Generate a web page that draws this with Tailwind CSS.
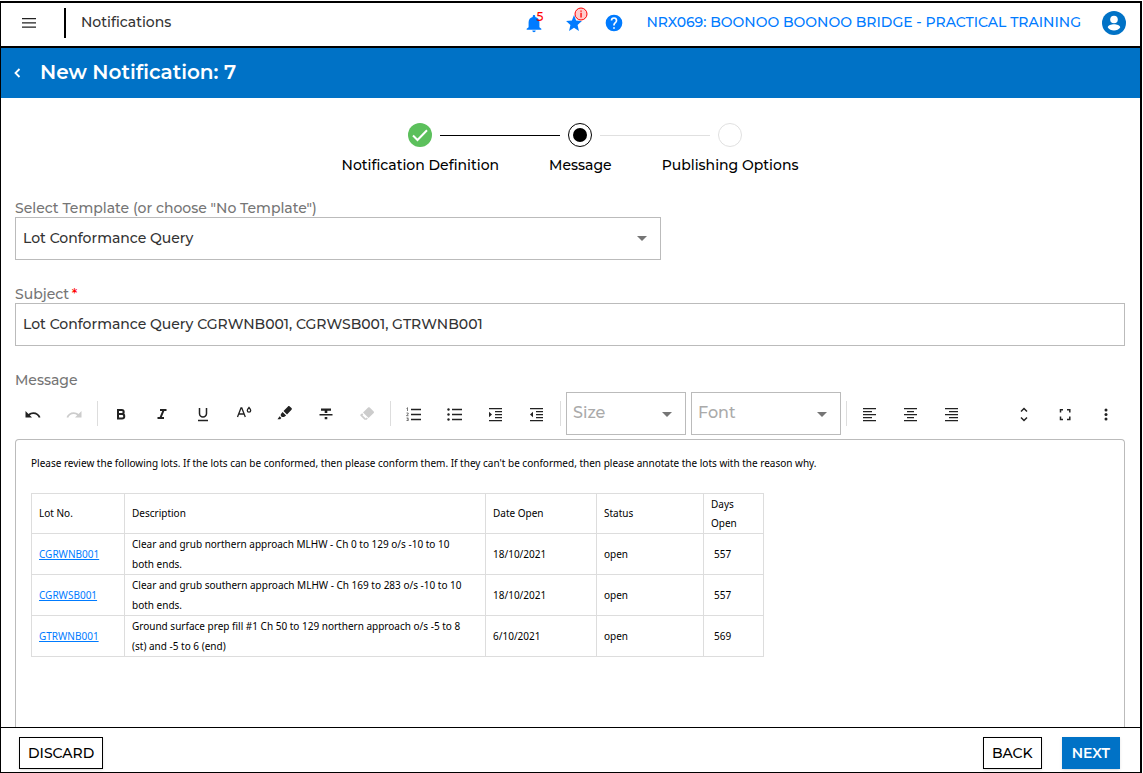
<!DOCTYPE html>
<html lang="en">
	<head>
		<meta charset="UTF-8" />
		<meta name="viewport" content="width=device-width, initial-scale=1.0" />
		<title>New Notification</title>
		<script src="https://cdn.jsdelivr.net/npm/@tailwindcss/browser@4"></script>
	</head>
	<body class="bg-white pt-px pr-px text-sm font-medium text-black font-['Montserrat','Inter',sans-serif]">
		<div class="flex flex-col h-[calc(100vh-1px)] border-t-2 border-r-2 border-b border-l border-black">
			<!-- Top bar -->
			<header class="flex items-center shrink-0 h-[45px] border-b-2 border-black pl-5 pr-[14px] pb-1">
				<button aria-label="Menu" class="w-4 h-4">
					<svg viewBox="0 0 16 16" class="w-4 h-4" fill="#222"><path d="M1 3h14v1.2H1zM1 7.3h14v1.2H1zM1 11.6h14v1.200H1z" /></svg>
				</button>
				<span class="w-[2px] h-[30px] bg-black ml-[27px] mr-[15px]"></span>
				<span class="pb-[2px] text-[#333]">Notifications</span>
				<div class="flex items-center ml-auto text-[#007bff]">
					<button aria-label="Alerts" class="relative w-5 h-5 mr-5">
						<svg viewBox="0 0 24 24" class="w-5 h-5" fill="currentColor"><path d="M12 23c1.1 0 2-.9 2-2h-4c0 1.100.9 2 2 2zm6.500-6v-6c0-3.200-1.800-5.600-5-6.300V4c0-.8-.7-1.500-1.500-1.500S10.500 3.200 10.500 4v.7c-3.200.7-5 3.100-5 6.300v6l-2.300 2v1h17.600v-1z" /></svg>
						<span class="absolute -top-1 left-3 text-xs leading-4 text-[#f00]">5</span>
					</button>
					<button aria-label="Favourites" class="relative w-5 h-5 mr-5">
						<svg viewBox="0 0 24 24" class="w-5 h-5" fill="currentColor"><path d="M12 17.800 17.900 21.500 16.300 14.500 21.500 9.700 14.500 9 12 2.500 9.500 9 2.500 9.700 7.700 14.500 6.100 21.500z" /></svg>
						<svg viewBox="0 0 14 14" class="absolute -top-[6px] left-[10px] w-[14px] h-[14px]"><circle cx="7" cy="7" r="6" fill="#fcc" stroke="#f00" /><path d="M6.400 5.800h1.300V10.500H6.400zM6.400 3.400h1.300v1.300H6.400z" fill="#f00" /></svg>
					</button>
					<button aria-label="Help" class="w-5 h-5 mr-[22px]">
						<svg viewBox="0 0 24 24" class="w-5 h-5" fill="currentColor"><path d="M12 2a10 10 0 1 0 0 20 10 10 0 0 0 0-20zm1 17h-2v-2h2zm2.070-7.750-.9.920C13.450 12.900 13 13.500 13 15h-2v-.5c0-1.100.45-2.100 1.170-2.830l1.240-1.260c.37-.36.59-.86.59-1.410a2 2 0 1 0-4 0H8a4 4 0 1 1 8 0c0 .88-.36 1.680-.93 2.250z" /></svg>
					</button>
					<a href="#" class="mr-[21px] pb-[2px]">NRX069: BOONOO BOONOO BRIDGE - PRACTICAL TRAINING</a>
					<button aria-label="Account" class="w-6 h-6">
						<svg viewBox="0 0 24 24" class="w-6 h-6"><circle cx="12" cy="12" r="12" fill="#0072c6" /><circle cx="12" cy="8.500" r="3.800" fill="#fff" /><path d="M5.800 16.500c0-2.100 3.600-3.200 6.200-3.200s6.200 1.100 6.200 3.200c-1.300 1.900-3.600 3-6.200 3s-4.900-1.100-6.200-3z" fill="#fff" /></svg>
					</button>
				</div>
			</header>

			<!-- Page title -->
			<div class="flex items-center shrink-0 h-[50px] bg-[#0072c6] text-white pl-3 pb-[2px]">
				<button aria-label="Back to list" class="w-2 h-3 mr-[19px]">
					<svg viewBox="0 0 8 12" class="w-2 h-3" fill="none" stroke="#fff" stroke-width="1.800"><path d="M6.500 3 2.500 7l4 4" /></svg>
				</button>
				<h1 class="text-xl font-semibold">New Notification: 7</h1>
			</div>

			<main class="flex flex-col flex-1 min-h-0 overflow-hidden pl-[14px] pr-[15px]">
				<!-- Steps -->
				<ol class="flex justify-center shrink-0 mt-[25px]">
					<li class="flex flex-col items-center">
						<div class="flex items-center w-full gap-2">
							<span class="flex-1"></span>
							<svg viewBox="0 0 24 24" class="w-6 h-6"><circle cx="12" cy="12" r="12" fill="#5cc05c" /><path d="m5 12.500 4.500 4.500L19 7.200" fill="none" stroke="#fff" stroke-width="2" /></svg>
							<span class="flex-1 h-px bg-black"></span>
						</div>
						<span class="px-[25px] mt-2 leading-5">Notification Definition</span>
					</li>
					<li class="flex flex-col items-center">
						<div class="flex items-center w-full gap-2">
							<span class="flex-1 h-px bg-black"></span>
							<svg viewBox="0 0 24 24" class="w-6 h-6"><circle cx="12" cy="12" r="11.500" fill="#fff" stroke="#000" /><circle cx="12" cy="12" r="7" /></svg>
							<span class="flex-1 h-px bg-[#e0e0e0]"></span>
						</div>
						<span class="px-[25px] mt-2 leading-5">Message</span>
					</li>
					<li class="flex flex-col items-center">
						<div class="flex items-center w-full gap-2">
							<span class="flex-1 h-px bg-[#e0e0e0]"></span>
							<svg viewBox="0 0 24 24" class="w-6 h-6"><circle cx="12" cy="12" r="11.500" fill="#fff" stroke="#e0e0e0" /></svg>
							<span class="flex-1"></span>
						</div>
						<span class="px-[25px] mt-2 leading-5">Publishing Options</span>
					</li>
				</ol>

				<!-- Form -->
				<label for="template" class="mt-[23px] leading-5 text-[#757575]">Select Template (or choose "No Template")</label>
				<div class="relative shrink-0 w-[646px] max-w-full -mt-px">
					<select id="template" class="appearance-none w-full h-[43px] border border-[#bbb] bg-white px-[7px] pb-[2px] text-[#333]">
						<option>Lot Conformance Query</option>
					</select>
					<svg viewBox="0 0 10 5" class="absolute right-[14px] top-[19px] w-[10px] h-[5px] pointer-events-none" fill="#757575"><path d="M0 0h10L5 5z" /></svg>
				</div>

				<label for="subject" class="mt-6 leading-5 text-[#757575]">Subject <span class="-ml-px text-[#f00]">*</span></label>
				<input id="subject" type="text" value="Lot Conformance Query CGRWNB001, CGRWSB001, GTRWNB001" class="shrink-0 w-full h-[43px] -mt-px border border-[#bbb] px-[7px] pb-[2px] text-[#333]" />

				<span class="mt-6 leading-5 text-[#757575]">Message</span>

				<!-- Editor toolbar -->
				<div class="flex items-center shrink-0 mt-[2px] -ml-[3px] -mr-px h-[43px] text-[#222]">
					<button aria-label="Undo" class="flex justify-center w-[41px]">
						<svg viewBox="0 0 18 18" class="w-[18px] h-[18px]" fill="currentColor"><path d="M1.500 6v6.500H8L5.800 10.200c1-.8 2.200-1.200 3.500-1.200 2.600 0 4.700 1.500 5.500 3.800l1.700-.5C15.500 9.300 12.700 7.200 9.300 7.200c-1.800 0-3.500.7-4.800 1.800z" /></svg>
					</button>
					<button aria-label="Redo" disabled class="flex justify-center w-[41px] text-[#ccc]">
						<svg viewBox="0 0 18 18" class="w-[18px] h-[18px]" fill="currentColor"><path d="M16.500 6v6.500H10l2.200-2.300c-1-.8-2.200-1.200-3.500-1.200-2.600 0-4.700 1.500-5.500 3.800l-1.700-.5C2.500 9.300 5.300 7.200 8.700 7.200c1.800 0 3.500.7 4.800 1.800z" /></svg>
					</button>
					<span class="w-px h-[25px] bg-[#ddd] ml-[3px] mr-[2px]"></span>
					<button aria-label="Bold" class="flex justify-center w-[41px]">
						<svg viewBox="0 0 18 18" class="w-[18px] h-[18px]" fill="none" stroke="currentColor" stroke-width="2"><path d="M6 5h3.700a1.900 1.900 0 0 1 0 4H6zM6 9h4a2.200 2.200 0 0 1 0 4.500H6z" /></svg>
					</button>
					<button aria-label="Italic" class="flex justify-center w-[41px]">
						<svg viewBox="0 0 18 18" class="w-[18px] h-[18px]" fill="currentColor"><path d="M7 4h6.500v2h-2.200L8.800 12H11v2H4.500v-2h2.200l2.500-6H7z" /></svg>
					</button>
					<button aria-label="Underline" class="flex justify-center w-[41px]">
						<svg viewBox="0 0 18 18" class="w-[18px] h-[18px]" fill="none" stroke="currentColor" stroke-width="1.500"><path d="M5.500 3v5.500a3.500 3.500 0 0 0 7 0V3M4 15.500h10" /></svg>
					</button>
					<button aria-label="Font colour" class="flex justify-center w-[41px]">
						<svg viewBox="0 0 18 18" class="w-[18px] h-[18px]" fill="none" stroke="currentColor" stroke-width="1.300"><path d="M2.500 12 6 3h.8l3.500 9M3.700 9h5.400" /><path d="M14 2.500c1 1.200 1.700 2 1.700 2.900a1.700 1.700 0 0 1-3.400 0c0-.9.700-1.700 1.700-2.900z" /></svg>
					</button>
					<button aria-label="Highlight" class="flex justify-center w-[41px]">
						<svg viewBox="0 0 18 18" class="w-[18px] h-[18px]" fill="currentColor"><path d="m7.500 6 4.500-4.600c.5-.5 1.200-.5 1.700 0l1.800 1.700c.5.500.5 1.200 0 1.700l-4.500 4.600zM6.600 7l3.500 3.400L8 12H6L4.800 11V9.200zM3.600 11.200l1.800 1.700-1.200 1.300H1.500z" /></svg>
					</button>
					<button aria-label="Strikethrough" class="flex justify-center w-[41px]">
						<svg viewBox="0 0 18 18" class="w-[18px] h-[18px]" fill="currentColor"><path d="M4 3.500h10v2.200h-3.700V8H7.700V5.700H4zM2.500 9h13v1.400h-13zM7.700 12h2.600v2.300H7.700z" /></svg>
					</button>
					<button aria-label="Clear formatting" disabled class="flex justify-center w-[41px] text-[#ccc]">
						<svg viewBox="0 0 18 18" class="w-[18px] h-[18px]" fill="currentColor"><path d="m5 7.500 5.100-5c.5-.5 1.100-.5 1.600 0l4 4c.5.500.5 1.100 0 1.600l-5.100 5zM4.200 8.300l1.100 1.100-.9.9 3.400 3.300 1-1 1 1-1.100 1.100H6.500l-4-4c-.4-.4-.4-.9 0-1.300z" /></svg>
					</button>
					<span class="w-px h-[25px] bg-[#ddd] ml-[3px] mr-[2px]"></span>
					<button aria-label="Numbered list" class="flex justify-center w-[41px]">
						<svg viewBox="0 0 18 18" class="w-[18px] h-[18px]" fill="none" stroke="currentColor"><path d="M6 4.500h10M6 9.500h10M6 14.500h10" stroke-width="1.400" /><path d="m1.500 3.500 1-.8V6M1.500 8h1.700v1l-1.700 1.700h2M1.500 13h1.800l-.8 1.200h.8v1.300H1.500" stroke-width=".6" /></svg>
					</button>
					<button aria-label="Bulleted list" class="flex justify-center w-[41px]">
						<svg viewBox="0 0 18 18" class="w-[18px] h-[18px]" fill="currentColor"><path d="M6 3.800h10v1.400H6zM6 8.800h10v1.400H6zM6 13.800h10v1.400H6z" /><circle cx="2.500" cy="4.500" r="1.200" /><circle cx="2.500" cy="9.500" r="1.200" /><circle cx="2.500" cy="14.500" r="1.200" /></svg>
					</button>
					<button aria-label="Increase indent" class="flex justify-center w-[41px]">
						<svg viewBox="0 0 18 18" class="w-[18px] h-[18px]" fill="currentColor"><path d="M2 3h13v1.300H2zM8 6h7v1.300H8zM8 9h7v1.300H8zM8 12h7v1.300H8zM2 15h13v1.300H2zM2 6.800v5.500l3-2.700z" /></svg>
					</button>
					<button aria-label="Decrease indent" class="flex justify-center w-[41px]">
						<svg viewBox="0 0 18 18" class="w-[18px] h-[18px]" fill="currentColor"><path d="M2 3h13v1.300H2zM8 6h7v1.300H8zM8 9h7v1.300H8zM8 12h7v1.300H8zM2 15h13v1.300H2zM5 6.800v5.500L2 9.600z" /></svg>
					</button>
					<span class="w-px h-[25px] bg-[#ddd] ml-[3px] mr-[2px]"></span>
					<div class="relative w-[120px] ml-[3px]">
						<select aria-label="Size" class="appearance-none w-full h-[43px] border border-[#bbb] bg-white px-[6px] pb-[2px] text-base text-[#aaa]">
							<option>Size</option>
						</select>
						<svg viewBox="0 0 10 5" class="absolute right-[14px] top-[20px] w-[10px] h-[5px] pointer-events-none" fill="#757575"><path d="M0 0h10L5 5z" /></svg>
					</div>
					<div class="relative w-[150px] ml-[5px] mr-[2px]">
						<select aria-label="Font" class="appearance-none w-full h-[43px] border border-[#bbb] bg-white px-[6px] pb-[2px] text-base text-[#aaa]">
							<option>Font</option>
						</select>
						<svg viewBox="0 0 10 5" class="absolute right-[14px] top-[20px] w-[10px] h-[5px] pointer-events-none" fill="#757575"><path d="M0 0h10L5 5z" /></svg>
					</div>
					<span class="w-px h-[25px] bg-[#ddd] ml-[3px] mr-[2px]"></span>
					<button aria-label="Align left" class="flex justify-center w-[41px]">
						<svg viewBox="0 0 18 18" class="w-[18px] h-[18px]" fill="currentColor"><path d="M2 3h13v1.300H2zM2 6h9v1.300H2zM2 9h13v1.300H2zM2 12h9v1.300H2zM2 15h13v1.300H2z" /></svg>
					</button>
					<button aria-label="Align centre" class="flex justify-center w-[41px]">
						<svg viewBox="0 0 18 18" class="w-[18px] h-[18px]" fill="currentColor"><path d="M2 3h13v1.300H2zM5 6h7v1.300H5zM2 9h13v1.300H2zM5 12h7v1.300H5zM2 15h13v1.300H2z" /></svg>
					</button>
					<button aria-label="Align right" class="flex justify-center w-[41px]">
						<svg viewBox="0 0 18 18" class="w-[18px] h-[18px]" fill="currentColor"><path d="M2 3h13v1.300H2zM6 6h9v1.300H6zM2 9h13v1.300H2zM6 12h9v1.300H6zM2 15h13v1.300H2z" /></svg>
					</button>
					<button aria-label="Line height" class="flex justify-center w-[41px] ml-auto">
						<svg viewBox="0 0 18 18" class="w-[18px] h-[18px]" fill="none" stroke="currentColor" stroke-width="1.500"><path d="M6 6.500l3-3 3 3M6 12.500l3 3 3-3" /></svg>
					</button>
					<button aria-label="Full screen" class="flex justify-center w-[41px]">
						<svg viewBox="0 0 18 18" class="w-[18px] h-[18px]" fill="none" stroke="currentColor" stroke-width="1.500"><path d="M4.500 7.500V4.700H7M11 4.700h2.800v2.800M13.800 11.500v3H11M7 14.500H4.500v-3" /></svg>
					</button>
					<button aria-label="More" class="flex justify-center w-[41px]">
						<svg viewBox="0 0 18 18" class="w-[18px] h-[18px]" fill="currentColor"><circle cx="9" cy="5" r="1.500" /><circle cx="9" cy="9.500" r="1.500" /><circle cx="9" cy="14" r="1.500" /></svg>
					</button>
				</div>

				<!-- Editor content -->
				<div class="flex-1 min-h-0 mt-1 border border-b-0 border-[#bbb] rounded-t px-[15px] pt-[13px] text-[10px] leading-5 font-normal font-['Noto_Sans','Open_Sans',sans-serif]">
					<p>Please review the following lots. If the lots can be conformed, then please conform them. If they can't be conformed, then please annotate the lots with the reason why.</p>
					<table class="table-fixed w-[733px] mt-5 border-collapse text-left [&_th]:h-10 [&_th]:leading-[19px] [&_th]:font-normal [&_th]:border [&_td]:border [&_th]:border-[#ddd] [&_td]:border-[#ddd] [&_th]:px-[7px] [&_td]:px-[7px]">
						<colgroup>
							<col class="w-[93px]" />
							<col class="w-[361px]" />
							<col class="w-[111px]" />
							<col class="w-[107px]" />
							<col class="w-[60px]" />
						</colgroup>
						<thead>
							<tr><th>Lot No.</th><th>Description</th><th>Date Open</th><th>Status</th><th>Days Open</th></tr>
						</thead>
						<tbody>
							<tr>
								<td><a href="#" class="text-[#007bff] underline">CGRWNB001</a></td>
								<td>Clear and grub northern approach MLHW - Ch 0 to 129 o/s -10 to 10<br />both ends.</td>
								<td>18/10/2021</td>
								<td>open</td>
								<td><span class="pl-[3px]">557</span></td>
							</tr>
							<tr>
								<td><a href="#" class="text-[#007bff] underline">CGRWSB001</a></td>
								<td>Clear and grub southern approach MLHW - Ch 169 to 283 o/s -10 to 10<br />both ends.</td>
								<td>18/10/2021</td>
								<td>open</td>
								<td><span class="pl-[3px]">557</span></td>
							</tr>
							<tr>
								<td><a href="#" class="text-[#007bff] underline">GTRWNB001</a></td>
								<td>Ground surface prep fill #1 Ch 50 to 129 northern approach o/s -5 to 8<br />(st) and -5 to 6 (end)</td>
								<td>6/10/2021</td>
								<td>open</td>
								<td><span class="pl-[3px]">569</span></td>
							</tr>
						</tbody>
					</table>
				</div>
			</main>

			<!-- Actions -->
			<footer class="flex items-center shrink-0 h-[45px] border-t border-black pl-[18px] pr-5 pt-[6px]">
				<button class="h-8 px-2 border border-black bg-white shadow">DISCARD</button>
				<button class="h-8 px-2 border border-black bg-white shadow ml-auto">BACK</button>
				<button class="h-8 px-[10px] bg-[#0072c6] text-white font-semibold shadow ml-5">NEXT</button>
			</footer>
		</div>
	</body>
</html>
